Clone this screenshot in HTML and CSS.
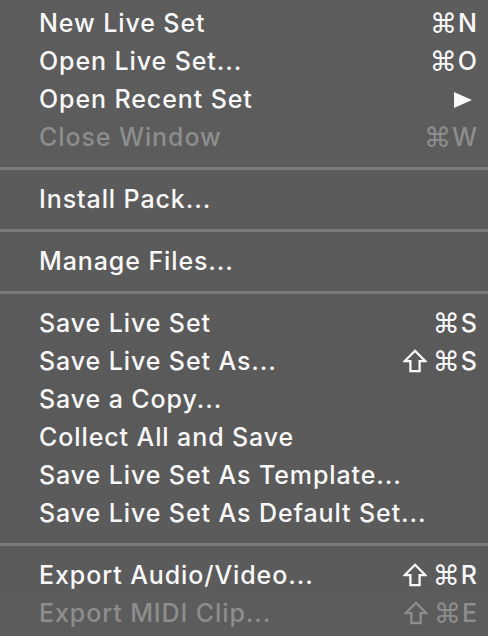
FILE: index.html
```html
<!DOCTYPE html>
<html lang="en">
<head>
<meta charset="utf-8">
<title>File menu</title>
<link rel="stylesheet" href="styles.css">
</head>
<body>
<ul class="menu">
  <li class="item"><span class="label">New Live Set</span><span class="key"><span class="cmd">⌘</span>N</span></li>
  <li class="item"><span class="label">Open Live Set...</span><span class="key"><span class="cmd">⌘</span>O</span></li>
  <li class="item"><span class="label">Open Recent Set</span><span class="key"><svg class="sub" width="18" height="16" viewBox="0 0 18 16"><polygon points="0,0 18,8 0,16" fill="currentColor"/></svg></span></li>
  <li class="item disabled"><span class="label">Close Window</span><span class="key"><span class="cmd">⌘</span>W</span></li>
  <li class="sep"></li>
  <li class="item"><span class="label">Install Pack...</span></li>
  <li class="sep"></li>
  <li class="item"><span class="label">Manage Files...</span></li>
  <li class="sep"></li>
  <li class="item"><span class="label">Save Live Set</span><span class="key"><span class="cmd">⌘</span>S</span></li>
  <li class="item"><span class="label">Save Live Set As...</span><span class="key"><svg class="shift" width="24" height="24" viewBox="0 0 24 24"><path d="M12 1.8 L22.4 12.2 H16.6 V22.2 H7.4 V12.2 H1.6 Z" fill="none" stroke="currentColor" stroke-width="2.3" stroke-linejoin="miter"/></svg><span class="cmd">⌘</span>S</span></li>
  <li class="item"><span class="label">Save a Copy...</span></li>
  <li class="item"><span class="label">Collect All and Save</span></li>
  <li class="item"><span class="label">Save Live Set As Template...</span></li>
  <li class="item"><span class="label">Save Live Set As Default Set...</span></li>
  <li class="sep"></li>
  <li class="item"><span class="label">Export Audio/Video...</span><span class="key"><svg class="shift" width="24" height="24" viewBox="0 0 24 24"><path d="M12 1.8 L22.4 12.2 H16.6 V22.2 H7.4 V12.2 H1.6 Z" fill="none" stroke="currentColor" stroke-width="2.3" stroke-linejoin="miter"/></svg><span class="cmd">⌘</span>R</span></li>
  <li class="item disabled"><span class="label">Export MIDI Clip...</span><span class="key"><svg class="shift" width="24" height="24" viewBox="0 0 24 24"><path d="M12 1.8 L22.4 12.2 H16.6 V22.2 H7.4 V12.2 H1.6 Z" fill="none" stroke="currentColor" stroke-width="2.3" stroke-linejoin="miter"/></svg><span class="cmd">⌘</span>E</span></li>
</ul>
</body>
</html>
```

FILE: styles.css
```css
html, body {
  margin: 0;
  padding: 0;
}
body {
  width: 488px;
  height: 636px;
  overflow: hidden;
  background: linear-gradient(180deg, #5d5d5d 0%, #5a5a5a 60%, #5c5c5c 100%);
  font-family: Inter, "Noto Sans", "DejaVu Sans", sans-serif;
  color: #f8f8f8;
}
.menu {
  list-style: none;
  margin: 0;
  padding: 6px 0 0 0;
}
.item {
  display: flex;
  align-items: center;
  justify-content: space-between;
  box-sizing: border-box;
  height: 38px;
  padding: 0 11px 3px 39px;
  font-size: 25px;
  font-weight: 500;
  line-height: 35px;
}
.label {
  letter-spacing: 0.9px;
}
.item.disabled {
  color: #8d8d8d;
}
.key {
  display: flex;
  align-items: center;
  gap: 1px;
}
.cmd {
  font-family: "DejaVu Sans", sans-serif;
  font-weight: 400;
  font-size: 27px;
}
.shift {
  margin-right: 5px;
  margin-top: -1px;
}
.sub {
  margin-right: 5px;
}
.sep {
  height: 3px;
  margin: 9px 0 12px 0;
  background: #7a7a7a;
}
```
